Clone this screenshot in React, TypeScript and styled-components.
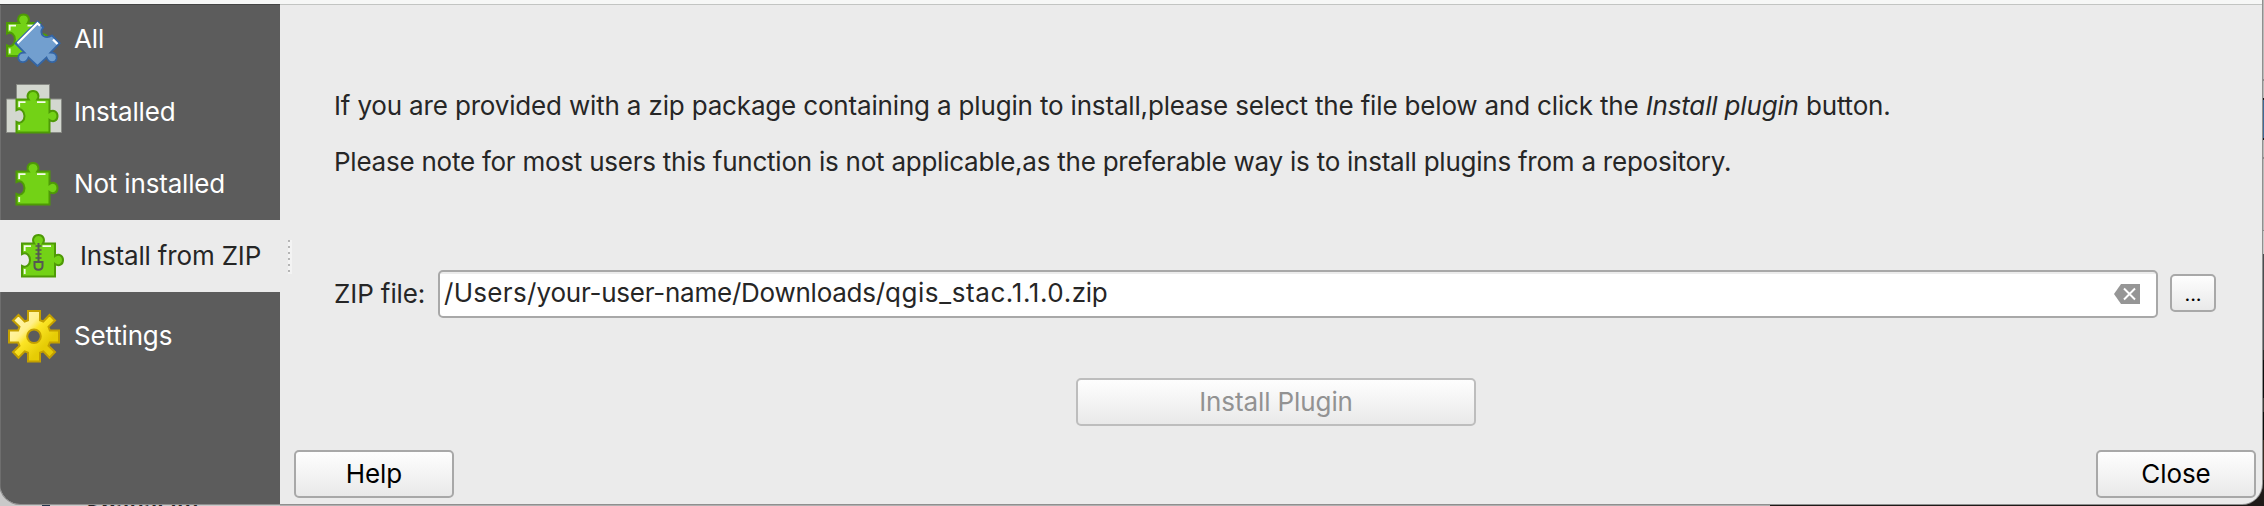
import React from 'react';
import styled, { createGlobalStyle } from 'styled-components';

const GlobalStyle = createGlobalStyle`
  * { box-sizing: border-box; }
  body { margin: 0; background: #c9c9c9; overflow: hidden; }
  p { margin: 0; }
`;

const Desktop = styled.div`
  position: relative;
  width: 2264px;
  height: 506px;
  overflow: hidden;
  background: linear-gradient(90deg, #c9c9c9 0 280px, #b0b0b0 280px 1770px, #1f1a18 1770px);
  font-family: Inter, 'Liberation Sans', sans-serif;
  font-size: 26px;
  line-height: 32px;
  color: #262626;
`;

const Backdrop = styled.div`
  position: absolute;
  right: 0;
  top: 0;
  width: 40px;
  height: 506px;
  background: linear-gradient(
    #b9b9b9 0 79px, #8a8a8a 79px 81px, #b9b9b9 81px 98px, #15181c 98px 100px,
    #3f6a98 100px 138px, #15181c 138px 140px, #b9b9b9 140px 157px,
    #8a8a8a 157px 159px, #b9b9b9 159px 230px, #8a8a8a 230px 231px,
    #c9c9c9 231px 254px, #4a4d50 254px 350px, #2a2a2a 350px 360px, #0c0c0c 360px 398px,
    #3a3835 398px 412px, #0a0c0a 412px 440px, #3a2d24 440px 480px, #1f1a18 480px
  );
`;

const HiddenLabel = styled.span`
  position: absolute;
  left: 86px;
  top: 491px;
  font-weight: 600;
  font-size: 23px;
  letter-spacing: 0.2px;
  color: #222;
`;

const HiddenArrow = styled.span`
  position: absolute;
  left: 42px;
  top: 500px;
  width: 8px;
  height: 6px;
  background: #22364c;
`;

const Dialog = styled.div`
  position: relative;
  display: flex;
  flex-direction: column;
  width: 2262px;
  height: 504px;
  border-radius: 0 0 20px 20px;
  overflow: hidden;
  background: #ebebeb;
  box-shadow: 0 0 0 1px #8f8f8f;
`;

const TitleEdge = styled.div`
  flex: none;
  height: 5px;
  background: #f6f7f6;
  border-bottom: 1px solid #c2c4c2;
`;

const Body = styled.div`
  flex: 1;
  display: flex;
  min-height: 0;
`;

const Sidebar = styled.nav`
  width: 280px;
  background: #5c5c5c;
  border-top: 1px solid #444;
  margin-top: -1px;
  box-shadow: inset 1px 0 #6e6e6e;
`;

const NavItem = styled.div<{ $active?: boolean; $height?: number; $lift?: number }>`
  display: flex;
  align-items: center;
  height: ${(p) => p.$height ?? 72}px;
  padding-left: ${(p) => (p.$active ? 12 : 6)}px;
  padding-bottom: ${(p) => p.$lift ?? 0}px;
  gap: ${(p) => (p.$active ? 12 : 11)}px;
  background: ${(p) => (p.$active ? '#ebebeb' : 'transparent')};
  color: ${(p) => (p.$active ? '#262626' : '#fff')};
  letter-spacing: -0.17px;
  svg { flex: none; }
`;

const Grip = styled.div`
  width: 28px;
  padding: 235px 0 0 8px;
`;

const Dots = styled.div`
  width: 4px;
  height: 34px;
  background:
    repeating-linear-gradient(#b5b5b5 0 2px, transparent 2px 6px) 0 0 / 2px 100% no-repeat,
    #f3f3f3;
`;

const Main = styled.main`
  flex: 1;
  display: flex;
  flex-direction: column;
  padding: 0 6px 6px 14px;
`;

const Content = styled.section`
  display: flex;
  flex-direction: column;
  padding: 85px 40px 0 12px;
`;

const Paragraph = styled.p<{ $ls: number }>`
  white-space: pre;
  letter-spacing: ${(p) => p.$ls}px;
  margin-bottom: 24px;
`;

const FileRow = styled.div`
  display: flex;
  align-items: center;
  margin-top: 68px;
`;

const FieldLabel = styled.label`
  width: 104px;
  white-space: pre;
  letter-spacing: -0.1px;
`;

const Field = styled.div`
  flex: 1;
  display: flex;
  align-items: center;
  justify-content: space-between;
  height: 48px;
  padding: 0 16px 0 4px;
  border: 2px solid #a8a8a8;
  border-radius: 5px;
  background: linear-gradient(#ececec 0 2px, #fff 2px);
`;

const FilePath = styled.span`
  padding-bottom: 2px;
  white-space: pre;
`;

const Segment = styled.span<{ $ls: number }>`
  letter-spacing: ${(p) => p.$ls}px;
`;

const Button = styled.button<{ $width: number; $height?: number }>`
  display: flex;
  align-items: center;
  justify-content: center;
  width: ${(p) => p.$width}px;
  height: ${(p) => p.$height ?? 48}px;
  padding: 0;
  border: 2px solid #a8a8a8;
  border-radius: 5px;
  background: linear-gradient(#fefefe, #e9e9e9);
  font: inherit;
  letter-spacing: -0.1px;
  color: #000;
  &:disabled { color: #929292; border-color: #bdbdbd; }
`;

const BrowseButton = styled(Button)`
  margin: 0 0 2px 12px;
  padding-top: 1px;
  font-size: 20px;
`;

const InstallRow = styled.div`
  display: flex;
  margin: 60px 0 0 742px;
`;

const Footer = styled.footer`
  display: flex;
  justify-content: space-between;
  margin: auto 0 0 -28px;
`;

const PUZZLE =
  'M1 9.5H13.2C10.5 5.5 13 1 17.5 1S24.500 5.500 21.800 9.500H34V22C38 19.200 42 21.500 42 26S38 32.800 34 30V42.500H1V32C5.500 34.300 9 30.500 9 26S5.500 17.700 1 20Z';

const Puzzle = ({ zip }: { zip?: boolean }) => (
  <>
    <path d={PUZZLE} fill="#73d216" stroke="#4e9a06" strokeWidth="2" />
    <path d="M3.700 17V12.200H10M21.500 12.200H30M3.700 35V40" fill="none" stroke="#f4fbea" strokeWidth="1.800" />
    {zip && (
      <g fill="none" stroke="#555753" strokeWidth="2">
        <path d="M17.500 9V28" strokeWidth="2" />
        <path d="M14.500 12H20.500M14.500 16H20.500M14.500 20H20.500M14.500 24H20.500" strokeWidth="1.600" />
        <path d="M13.500 28H21.500V32C21.500 37 13.500 37 13.500 32Z" />
      </g>
    )}
  </>
);

const AllIcon = () => (
  <svg width="57" height="60" viewBox="0 0 57 60">
    <g transform="translate(0 4.500)"><Puzzle /></g>
    <path
      d="M31.500 12.500L37.300 18.300C34.500 22 35 25 37.500 27C40 28.500 43.500 28 46 26.500L53.700 34.200L44.500 43.500C49 43.500 51.500 46 50.500 50C49 54.500 43 54.500 40.500 48.500L31.500 57L22.500 48.500C20 54.500 14 54.500 12.500 50C11.500 46 14 43.500 18.500 43.500L9.500 34.500Z"
      fill="#729fcf" stroke="#3465a4" strokeWidth="1.800"
    />
    <path d="M11.500 34.300L31.500 14.300L34 16.800M47 30.500L51.500 35" fill="none" stroke="#fff" strokeWidth="2.200" />
  </svg>
);

const InstalledIcon = () => (
  <svg width="57" height="56" viewBox="0 0 57 56">
    <path d="M10.500 .5H43.500V15H55.500V48.500H.5V15H10.500Z" fill="#d3d7cf" stroke="#888a85" />
    <g transform="translate(9.500 6)"><Puzzle /></g>
  </svg>
);

const NotInstalledIcon = () => (
  <svg width="57" height="56" viewBox="0 0 57 56">
    <g transform="translate(9.500 6)"><Puzzle /></g>
  </svg>
);

const ZipIcon = () => (
  <svg width="56" height="56" viewBox="0 0 56 56">
    <g transform="translate(9 6)"><Puzzle zip /></g>
  </svg>
);

const GearIcon = () => (
  <svg width="57" height="56" viewBox="0 0 57 56">
    <defs>
      <linearGradient id="gold" x1="0" y1="0" x2="1" y2="1">
        <stop offset="0.150" stopColor="#fff6b0" />
        <stop offset="0.350" stopColor="#fff08a" />
        <stop offset="0.450" stopColor="#fce526" />
        <stop offset="0.700" stopColor="#e6cc05" />
      </linearGradient>
    </defs>
    <path
      fillRule="evenodd"
      d="M22 3H34V12.200L37.300 13.500L43.500 7L49 12.500L42.500 18.800L43.900 22.500H53V34.500H43.900L42.500 37.800L49 44L43.500 49.700L37.300 43.300L34 44.600V53.500H22V44.600L18.700 43.300L12.500 49.700L7 44L13.500 37.800L12.100 34.500H3V22.500H12.100L13.500 18.800L7 12.500L12.500 7L18.700 13.500L22 12.200ZM28 21.500A6.800 6.800 0 1 0 28 35.100A6.800 6.800 0 1 0 28 21.500Z"
      fill="url(#gold)" stroke="#c4a000" strokeWidth="2"
    />
  </svg>
);

const ClearIcon = () => (
  <svg width="26" height="20" viewBox="0 0 26 20">
    <path d="M0 10L7 0H26V20H7Z" fill="#969696" />
    <path d="M10 4.500L21 15.500M21 4.500L10 15.500" stroke="#fff" strokeWidth="2" />
  </svg>
);

export default function App() {
  return (
    <Desktop>
      <GlobalStyle />
      <Backdrop />
      <HiddenArrow />
      <HiddenLabel>SpatiaLite</HiddenLabel>
      <Dialog>
        <TitleEdge />
        <Body>
          <Sidebar>
            <NavItem $height={71} $lift={3}><AllIcon />All</NavItem>
            <NavItem><InstalledIcon />Installed</NavItem>
            <NavItem><NotInstalledIcon />Not installed</NavItem>
            <NavItem $active><ZipIcon />Install from ZIP</NavItem>
            <NavItem $height={88}><GearIcon />Settings</NavItem>
          </Sidebar>
          <Grip><Dots /></Grip>
          <Main>
            <Content>
              <Paragraph $ls={-0.168}>
                If you are provided with a zip package containing a plugin to install,please select the file below and click the <i>Install plugin</i> button.
              </Paragraph>
              <Paragraph $ls={-0.24}>
                Please note for most users this function is not applicable,as the preferable way is to install plugins from a repository.
              </Paragraph>
              <FileRow>
                <FieldLabel>ZIP file:</FieldLabel>
                <Field>
                  <FilePath>
                    <Segment $ls={0.3}>/Users/</Segment>
                    <Segment $ls={-0.24}>your-user-name/Downloads/</Segment>
                    <Segment $ls={0.6}>qgis_stac.1.1.0.</Segment>
                    <Segment $ls={-0.3}>zip</Segment>
                  </FilePath>
                  <ClearIcon />
                </Field>
                <BrowseButton $width={46} $height={38}>...</BrowseButton>
              </FileRow>
              <InstallRow>
                <Button disabled $width={400}>Install Plugin</Button>
              </InstallRow>
            </Content>
            <Footer>
              <Button $width={160}>Help</Button>
              <Button $width={160}>Close</Button>
            </Footer>
          </Main>
        </Body>
      </Dialog>
    </Desktop>
  );
}
